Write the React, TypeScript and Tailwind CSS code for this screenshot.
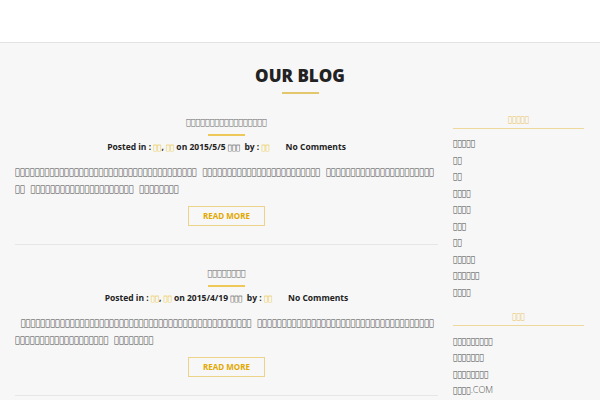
import React from "react";

const T = "\uE000";
const t = (n: number) => T.repeat(n);
const G = "\u00a0 ";

const sidebar1 = [t(5), t(2), t(2), t(4), t(4), t(3), t(2), t(5), t(6), t(4)];
const sidebar2 = [t(9), t(7), t(8)];

function Tofu({ n }: { n: number }) {
  return <span className="font-['DejaVu_Sans_Condensed'] text-[7.5px] font-bold">{t(n)}</span>;
}

function Meta({ date }: { date: string }) {
  return (
    <div className="mt-[3px] text-center font-['Open_Sans'] text-[8.5px] font-bold leading-[15px] text-[#222]">
      Posted in : <span className="text-[#e8b800]"><Tofu n={2} /></span>, <span className="text-[#e8b800]"><Tofu n={2} /></span> on {date} <Tofu n={3} />&nbsp; by : <span className="text-[#e8b800]"><Tofu n={2} /></span>
      <span className="ml-[16px]">No Comments</span>
    </div>
  );
}

function Post({ title, date, body }: { title: string; date: string; body: string }) {
  return (
    <div className="border-b border-[#e6e6e6] pb-[18px] pt-[20px]">
      <h3 className="text-center font-['DejaVu_Sans_Condensed'] text-[8.8px] font-bold leading-[16px] text-[#666]">{title}</h3>
      <div className="mx-auto mt-[4px] h-[2px] w-[37px] bg-[#efc85a]" />
      <Meta date={date} />
      <p className="mt-[9px] font-['DejaVu_Sans_Condensed'] text-[9.1px] font-bold leading-[17px] text-[#444] [line-break:anywhere]">{body}</p>
      <div className="mt-[8px] flex justify-center">
        <span className="flex h-[20px] w-[77px] items-center justify-center border border-[#ecd38a] font-['Open_Sans'] text-[8px] font-bold text-[#e2a900]">
          READ MORE
        </span>
      </div>
    </div>
  );
}

export default function App() {
  const body1 = `${t(37)}${G}${t(24)}${G}${t(24)}${G}${t(21)}${G}${t(8)}`;
  const body2 = `\u00a0\u00a0${t(47)}${G}${t(55)}${G}${t(8)}`;
  return (
    <div className="h-[400px] w-[600px] overflow-hidden bg-[#f7f7f7]">
      <div className="h-[43px] border-b border-[#e3e3e3] bg-white" />
      <h2 className="mt-[20px] text-center font-['Open_Sans'] text-[17px] font-extrabold leading-[26px] text-[#222]">OUR BLOG</h2>
      <div className="mx-auto mt-[3px] h-[2px] w-[37px] bg-[#e4c66c]" />
      <div className="flex gap-[15px] px-[15px]">
        <div className="w-[423px]">
          <Post title={t(17)} date="2015/5/5" body={body1} />
          <Post title={t(8)} date="2015/4/19" body={body2} />
        </div>
        <div className="w-[131px] pt-[19px] font-['DejaVu_Sans_Condensed']">
          <div className="border-b border-[#eed89c] pb-[1px] text-center text-[7.8px] font-bold leading-[14px] text-[#e9c15a]">{t(5)}</div>
          <ul className="mt-[6px] text-[8.2px] font-bold text-[#444]">
            {sidebar1.map((s, i) => (
              <li key={i} className="h-[16.5px] leading-[16.5px]">{s}</li>
            ))}
          </ul>
          <div className="mt-[10px] border-b border-[#eed89c] pb-[1px] text-center text-[7.8px] font-bold leading-[14px] text-[#e9c15a]">{t(3)}</div>
          <ul className="mt-[7px] text-[8.2px] font-bold text-[#444]">
            {sidebar2.map((s, i) => (
              <li key={i} className="h-[16.3px] leading-[16.3px]">{s}</li>
            ))}
            <li className="h-[16.3px] leading-[16.3px]">
              {t(4)}
              <span className="font-['Open_Sans'] text-[9px] font-light text-[#555]">.COM</span>
            </li>
          </ul>
        </div>
      </div>
    </div>
  );
}
